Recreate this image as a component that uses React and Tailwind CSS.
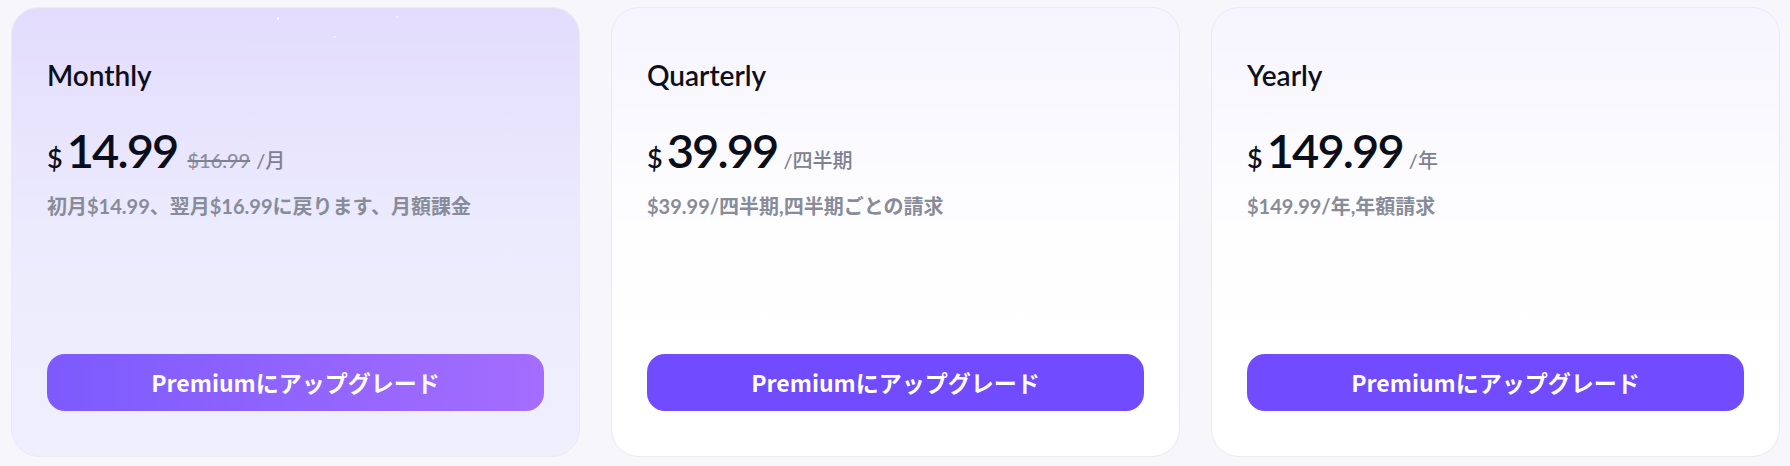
const plans = [
  {
    name: 'Monthly',
    price: '14.99',
    was: '$16.99',
    unit: '/月',
    note: '初月$14.99、翌月$16.99に戻ります、月額課金',
    featured: true,
  },
  {
    name: 'Quarterly',
    price: '39.99',
    unit: '/四半期',
    note: '$39.99/四半期,四半期ごとの請求',
  },
  {
    name: 'Yearly',
    price: '149.99',
    unit: '/年',
    note: '$149.99/年,年額請求',
  },
];

const latin = { fontFamily: 'Lato, "Noto Sans CJK JP", sans-serif' };
const cjk = { fontFamily: '"Noto Sans CJK JP", "Noto Sans", sans-serif' };

function PlanCard({ plan }) {
  return (
    <div
      className={`relative flex h-[450px] w-[569px] shrink-0 flex-col overflow-hidden rounded-[28px] border border-[#ebeaf3] px-[35px] pt-[49px] pb-[45px] ${
        plan.featured
          ? 'bg-gradient-to-b from-[#e3dcfd] via-[#ecebfd] to-[#f0effc]'
          : 'bg-gradient-to-b from-[#f6f4fe] via-[#fefeff] to-white'
      }`}
    >
      {plan.featured && (
        <>
          <span className="absolute left-[265px] top-[9px] h-[3px] w-[2px] rounded-full bg-white/80" />
          <span className="absolute left-[384px] top-[8px] h-[2px] w-[2px] rounded-full bg-white/70" />
          <span className="absolute left-[321px] top-[28px] h-[2px] w-[3px] rounded-full bg-white/50" />
        </>
      )}

      <h3 className="text-[28px] font-semibold leading-[36px] text-[#0d0f1c]" style={latin}>
        {plan.name}
      </h3>

      <div className="mt-[33px] flex items-baseline leading-[48px]" style={latin}>
        <span className="mr-[4px] text-[27px] font-semibold text-[#0d0f1c]">$</span>
        <span className="text-[47px] font-semibold tracking-[-0.04em] text-[#0a0d1a]">{plan.price}</span>
        {plan.was && (
          <span className="ml-[10px] text-[20px] font-medium text-[#8a8f9c] line-through decoration-[#7d8290]">
            {plan.was}
          </span>
        )}
        <span className="ml-[6px] text-[20px] font-medium text-[#7d8290]">{plan.unit}</span>
      </div>

      <p className="mt-[8px] text-[20px] font-bold leading-[28px] text-[#878c98]" style={latin}>
        {plan.note}
      </p>

      <button
        className={`mt-auto h-[57px] w-full rounded-[18px] text-[23px] font-semibold text-white ${
          plan.featured
            ? 'bg-gradient-to-r from-[#7d5afe] to-[#a46dfe]'
            : 'bg-[#704bff]'
        }`}
        style={cjk}
      >
        Premiumにアップグレード
      </button>
    </div>
  );
}

export default function App() {
  return (
    <div className="h-[466px] w-[1790px] overflow-hidden bg-[#f6f6fb] pl-[11px] pt-[7px]">
      <div className="flex gap-[31px]">
        {plans.map((p) => (
          <PlanCard key={p.name} plan={p} />
        ))}
      </div>
    </div>
  );
}
